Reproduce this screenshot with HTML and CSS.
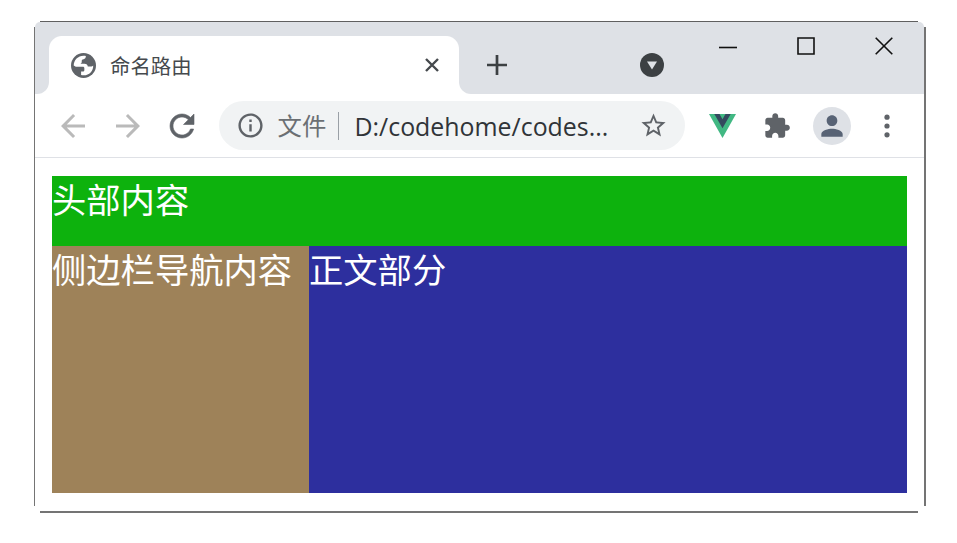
FILE: index.html
```html
<!DOCTYPE html>
<html lang="zh-CN">
<head>
<meta charset="utf-8">
<title>命名路由</title>
<link rel="stylesheet" href="styles.css">
</head>
<body>
<div class="window">
  <div class="tabstrip">
    <div class="strip-start"></div>
    <div class="tab">
      <svg class="globe" viewBox="0 0 24 24"><circle cx="12" cy="12" r="12"/><path d="M2.600 12C2.600 6.800 6.800 2.600 12 2.600c1 0 1.600.1 2.300.3-.1 1.800-.8 2.800-2.200 3-1.500.2-2 1-1.800 2.300.2 1-.3 1.700-1.200 2.100h3.800c2 0 3.200 1.100 3.200 2.700h3c.9 0 1.600-.5 2.200-1.100.3 5.300-3.800 9.500-9 9.500-1 0-1.800-.1-2.600-.3v-3.300h1.600c1 0 1.500-.7 1.500-1.600v-1.500c0-.9-.5-1.400-1.400-1.400H4.600z"/></svg>
      <span class="tab-title">命名路由</span>
      <svg class="tab-close" viewBox="0 0 14 14"><path d="M1 1l12 12M13 1L1 13"/></svg>
    </div>
    <div class="strip-end">
      <svg class="new-tab" viewBox="0 0 20 20"><path d="M10 0v20M0 10h20"/></svg>
      <svg class="tab-search" viewBox="0 0 24 24"><circle cx="12" cy="12" r="12"/><path d="M7 8.500h10l-5 8z"/></svg>
      <div class="controls">
        <svg viewBox="0 0 18 18"><path d="M0 10.500h18"/></svg>
        <svg viewBox="0 0 18 18"><path d="M1 1h16v16H1z"/></svg>
        <svg viewBox="0 0 18 18"><path d="M.7.7l16.600 16.600M17.300.7L.7 17.300"/></svg>
      </div>
    </div>
  </div>
  <div class="toolbar">
    <svg class="nav muted" viewBox="0 0 24 24"><path d="M20 11H7.830l5.590-5.590L12 4l-8 8 8 8 1.410-1.410L7.830 13H20v-2z"/></svg>
    <svg class="nav muted" viewBox="0 0 24 24"><path d="M12 4l-1.410 1.410L16.170 11H4v2h12.170l-5.580 5.590L12 20l8-8z"/></svg>
    <svg class="nav reload" viewBox="0 0 24 24"><path d="M17.650 6.350C16.200 4.900 14.210 4 12 4c-4.420 0-7.990 3.580-7.990 8s3.570 8 7.990 8c3.730 0 6.840-2.550 7.730-6h-2.080c-.82 2.330-3.040 4-5.650 4-3.310 0-6-2.690-6-6s2.690-6 6-6c1.660 0 3.140.69 4.220 1.780L13 11h7V4l-2.350 2.350z"/></svg>
    <div class="address">
      <svg class="info" viewBox="0 0 24 24"><path d="M11 7h2v2h-2zm0 4h2v6h-2zm1-9C6.480 2 2 6.480 2 12s4.480 10 10 10 10-4.480 10-10S17.520 2 12 2zm0 18c-4.410 0-8-3.590-8-8s3.590-8 8-8 8 3.590 8 8-3.590 8-8 8z"/></svg>
      <span class="scheme">文件</span>
      <span class="divider"></span>
      <span class="url">D:/codehome/codes...</span>
      <svg class="star" viewBox="0 0 24 24"><path d="M22 9.240l-7.190-.62L12 2 9.190 8.630 2 9.240l5.460 4.730L5.820 21 12 17.270 18.180 21l-1.630-7.030L22 9.240zM12 15.400l-3.760 2.270 1-4.280-3.320-2.880 4.380-.38L12 6.100l1.710 4.040 4.380.38-3.320 2.880 1 4.280L12 15.400z"/></svg>
    </div>
    <svg class="vue" viewBox="0 0 27 24"><path fill="#41b883" d="M0 0h27L13.500 24z"/><path fill="#34495e" d="M5.300 0h5.200l3 5.200 3-5.200h5.200l-8.200 14.300z"/></svg>
    <svg class="puzzle" viewBox="0 0 24 24"><path d="M20.500 11H19V7c0-1.100-.9-2-2-2h-4V3.500C13 2.120 11.880 1 10.500 1S8 2.120 8 3.500V5H4c-1.100 0-1.990.9-1.990 2v3.800H3.500c1.490 0 2.700 1.210 2.700 2.700s-1.210 2.700-2.700 2.700H2V20c0 1.100.9 2 2 2h3.800v-1.500c0-1.490 1.210-2.700 2.700-2.700 1.490 0 2.700 1.210 2.700 2.700V22H17c1.100 0 2-.9 2-2v-4h1.500c1.380 0 2.500-1.120 2.500-2.500S21.880 11 20.500 11z"/></svg>
    <div class="avatar"><svg viewBox="0 0 24 24"><path d="M12 12c2.210 0 4-1.790 4-4s-1.790-4-4-4-4 1.790-4 4 1.790 4 4 4zm0 2c-2.670 0-8 1.340-8 4v2h16v-2c0-2.660-5.330-4-8-4z"/></svg></div>
    <svg class="more" viewBox="0 0 6 24"><circle cx="3" cy="3.200" r="2.600"/><circle cx="3" cy="12" r="2.600"/><circle cx="3" cy="20.800" r="2.600"/></svg>
  </div>
  <main class="page">
    <header class="header">头部内容</header>
    <div class="columns">
      <aside class="sidebar">侧边栏导航内容</aside>
      <section class="content">正文部分</section>
    </div>
  </main>
</div>
</body>
</html>
```

FILE: styles.css
```css
* { box-sizing: border-box; }
body {
  margin: 0;
  padding: 21px 31px 0 34px;
  height: 543px;
  overflow: hidden;
  background: #fff;
  font-family: "Noto Sans", "Noto Sans CJK SC", sans-serif;
}
svg { display: block; flex: none; fill: #5f6368; }

/* Edge lines stop short of the rounded corners */
.window {
  width: 892px;
  height: 492px;
  padding: 1px 2px 2px 1px;
  background:
    linear-gradient(#606060, #606060) 6px 0 / 878px 1px no-repeat,
    linear-gradient(#747474, #747474) 6px 490px / 878px 2px no-repeat,
    linear-gradient(#747474, #747474) 0 6px / 1px 479px no-repeat,
    linear-gradient(#747474, #747474) 890px 6px / 2px 479px no-repeat;
}

.tabstrip {
  display: flex;
  height: 72px;
  padding-top: 14px;
  background: linear-gradient(#dee1e6, #dee1e6) 0 0 / 100% 14px no-repeat, #fff;
  border-radius: 5px 5px 0 0;
}
.strip-start { width: 14px; background: #dee1e6; border-bottom-right-radius: 12px; }
.tab {
  display: flex;
  align-items: center;
  width: 410px;
  padding: 0 20px 0 22px;
  background: radial-gradient(circle at 13px 13px, transparent 12.500px, #dee1e6 13.500px) 0 0 / 13px 13px no-repeat,
    radial-gradient(circle at 0 13px, transparent 12.500px, #dee1e6 13.500px) 100% 0 / 13px 13px no-repeat;
}
.globe { width: 25px; height: 25px; }
.globe path { fill: #fff; }
.tab-title { flex: 1; margin-left: 14px; padding-top: 1px; font-size: 20.400px; line-height: 30px; color: #45494d; }
.tab-close { width: 14px; height: 14px; fill: none; stroke: #45494d; stroke-width: 2.400; }
.strip-end {
  flex: 1;
  display: flex;
  align-items: center;
  background: #dee1e6;
  border-bottom-left-radius: 12px;
}
.new-tab { width: 20px; height: 20px; margin-left: 28px; fill: none; stroke: #3c4043; stroke-width: 2.700; }
.tab-search { width: 24px; height: 24px; margin-left: 133px; fill: #3c4043; }
.tab-search path { fill: #dee1e6; }
.controls { display: flex; gap: 60px; margin: -38px 0 0 55px; }
.controls svg { width: 18px; height: 18px; fill: none; stroke: #111; stroke-width: 1.600; }

.toolbar {
  display: flex;
  align-items: center;
  height: 64px;
  padding-left: 20px;
  border-bottom: 1.500px solid #dfe1e6;
  background: #fff;
}
.nav { width: 36px; height: 36px; margin-right: 18.500px; }
.muted { fill: #bababa; }
.reload { stroke: #5f6368; stroke-width: .4; }
.address {
  display: flex;
  align-items: center;
  width: 466px;
  height: 49px;
  padding: 0 17px;
  border-radius: 25px;
  background: #f1f3f4;
}
.info { width: 29px; height: 29px; }
.scheme { width: 49px; margin-left: 13px; padding-top: 1px; font-size: 24.400px; line-height: 36px; color: #6b6f73; }
.divider { width: 1px; height: 28px; margin-left: 11px; background: #9aa0a6; }
.url { flex: 1; margin-left: 16px; font-family: "Open Sans", "Noto Sans", sans-serif; font-size: 24.900px; line-height: 36px; white-space: nowrap; color: #303438; }
.star { width: 29px; height: 29px; }
.vue { width: 27px; height: 24px; margin-left: 24px; }
.puzzle { width: 28px; height: 28px; margin-left: 27px; }
.avatar {
  display: flex;
  align-items: center;
  justify-content: center;
  width: 38px;
  height: 38px;
  margin-left: 22px;
  border-radius: 50%;
  background: #dee1e6;
}
.avatar svg { width: 32px; height: 32px; fill: #586375; }
.more { width: 6px; height: 24px; margin-left: 33px; }

.page { padding: 18px 17px 0 17px; font-size: 34.300px; line-height: 48px; color: #fff; }
.header { height: 70px; background: #0db20d; }
.columns { display: flex; height: 247px; }
.sidebar { width: 257px; background: #9e8259; }
.content { flex: 1; background: #2d2f9e; }
```
